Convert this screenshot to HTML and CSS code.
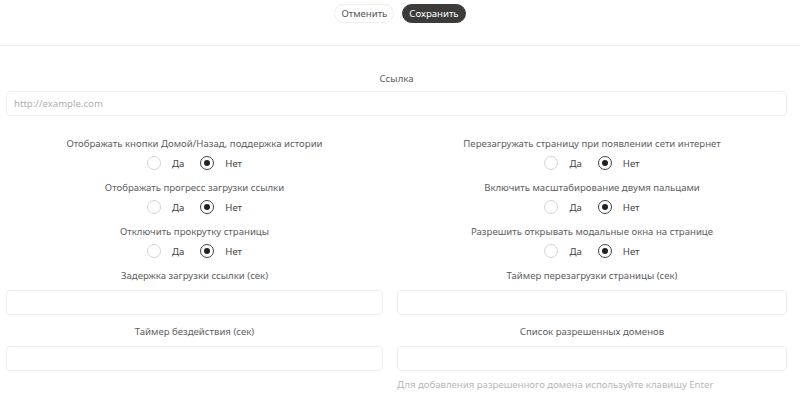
FILE: index.html
```html
<!DOCTYPE html>
<html lang="ru">
<head>
<meta charset="utf-8">
<link rel="stylesheet" href="styles.css">
</head>
<body>
<header class="toolbar">
  <button class="btn btn-cancel">Отменить</button>
  <button class="btn btn-save">Сохранить</button>
</header>
<main class="form">
  <div class="field field-main">
    <label class="label">Ссылка</label>
    <input class="input" type="text" placeholder="http://example.com">
  </div>
  <div class="cols">
    <div class="col">
      <div class="radio-group">
        <div class="label">Отображать кнопки Домой/Назад, поддержка истории</div>
        <div class="radios"><span class="radio"></span><span class="rtext">Да</span><span class="radio on"></span><span class="rtext">Нет</span></div>
      </div>
      <div class="radio-group">
        <div class="label">Отображать прогресс загрузки ссылки</div>
        <div class="radios"><span class="radio"></span><span class="rtext">Да</span><span class="radio on"></span><span class="rtext">Нет</span></div>
      </div>
      <div class="radio-group">
        <div class="label">Отключить прокрутку страницы</div>
        <div class="radios"><span class="radio"></span><span class="rtext">Да</span><span class="radio on"></span><span class="rtext">Нет</span></div>
      </div>
      <div class="field">
        <label class="label">Задержка загрузки ссылки (сек)</label>
        <input class="input" type="text">
      </div>
      <div class="field">
        <label class="label">Таймер бездействия (сек)</label>
        <input class="input" type="text">
      </div>
    </div>
    <div class="col">
      <div class="radio-group">
        <div class="label">Перезагружать страницу при появлении сети интернет</div>
        <div class="radios"><span class="radio"></span><span class="rtext">Да</span><span class="radio on"></span><span class="rtext">Нет</span></div>
      </div>
      <div class="radio-group">
        <div class="label">Включить масштабирование двумя пальцами</div>
        <div class="radios"><span class="radio"></span><span class="rtext">Да</span><span class="radio on"></span><span class="rtext">Нет</span></div>
      </div>
      <div class="radio-group">
        <div class="label">Разрешить открывать модальные окна на странице</div>
        <div class="radios"><span class="radio"></span><span class="rtext">Да</span><span class="radio on"></span><span class="rtext">Нет</span></div>
      </div>
      <div class="field">
        <label class="label">Таймер перезагрузки страницы (сек)</label>
        <input class="input" type="text">
      </div>
      <div class="field">
        <label class="label">Список разрешенных доменов</label>
        <input class="input" type="text">
        <div class="hint">Для добавления разрешенного домена используйте клавишу Enter</div>
      </div>
    </div>
  </div>
</main>
</body>
</html>
```
FILE: styles.css
```css
* { box-sizing: border-box; }
html, body { margin: 0; padding: 0; background: #fff; }
body {
  font-family: "Noto Sans", sans-serif;
  font-size: 9.6px;
  color: #555;
  overflow: hidden;
}
.toolbar {
  height: 46px;
  border-bottom: 1px solid #eeeeee;
  display: flex;
  justify-content: center;
  align-items: flex-start;
  gap: 8px;
  padding-top: 4px;
}
.btn {
  font-family: inherit;
  font-size: 9.6px;
  height: 19px;
  border-radius: 10px;
  padding: 0 6px;
  border: 1px solid #eee;
  line-height: 17px;
}
.btn-cancel { background: #fff; color: #555; }
.btn-save { background: #3d3b3a; color: #fff; border-color: #3d3b3a; }
.form {
  padding: 26px 13px 0 6px;
}
.field { display: flex; flex-direction: column; }
.label {
  text-align: center;
  display: block;
  line-height: 13px;
  color: #606060;
}
.input {
  margin-top: 8px;
  height: 25px;
  border: 1px solid #efefef;
  border-radius: 4px;
  font-family: inherit;
  font-size: 9.6px;
  padding: 0 7px;
  color: #555;
  outline: none;
}
.field-main .input { margin-top: 6px; }
.input::placeholder { color: #b0b0b0; }
.form > .field { margin-bottom: 21px; }
.cols {
  display: grid;
  grid-template-columns: 377px 390px;
  column-gap: 14px;
}
.col { display: flex; flex-direction: column; }
.radio-group { height: 44px; }
.radios {
  margin-top: 6px;
  display: flex;
  justify-content: center;
  align-items: center;
  height: 14px;
}
.radio {
  width: 14px;
  height: 14px;
  border-radius: 50%;
  border: 1px solid #d4d4d4;
  position: relative;
}
.radio.on { border-color: #444; }
.radio.on::after {
  content: "";
  position: absolute;
  left: 3px; top: 3px;
  width: 6px; height: 6px;
  border-radius: 50%;
  background: #222;
}
.rtext { margin-left: 11px; margin-right: 16px; color: #444; }
.rtext:last-child { margin-right: 0; }
.col .field + .field { margin-top: 10px; }
.hint {
  margin-top: 7px;
  color: #b8b8b8;
  text-align: left;
}
```
